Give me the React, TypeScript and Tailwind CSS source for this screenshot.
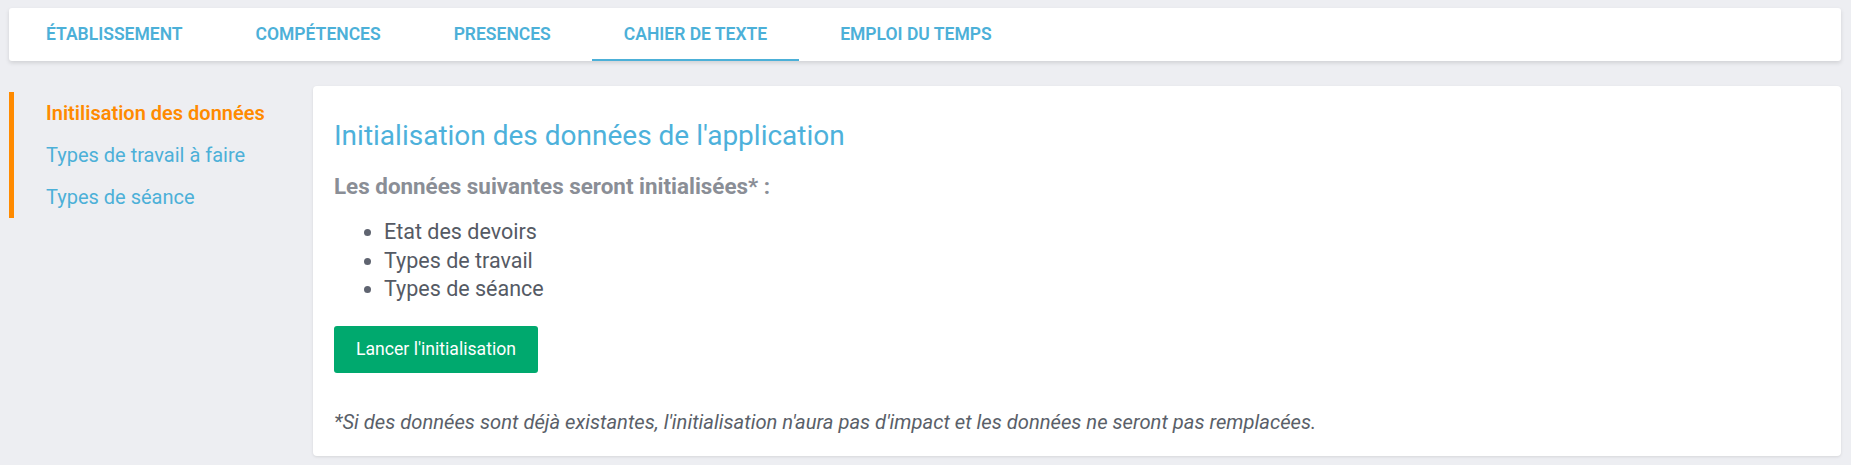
const tabs = ['Établissement', 'Compétences', 'Presences', 'Cahier de texte', 'Emploi du temps'];

const menu = [
  { label: 'Initilisation des données', active: true },
  { label: 'Types de travail à faire', active: false },
  { label: 'Types de séance', active: false },
];

const items = ['Etat des devoirs', 'Types de travail', 'Types de séance'];

export default function App() {
  return (
    <div
      className="min-h-[465px] bg-[#edeef2] pl-[9px] pr-[10px] pt-[8px]"
      style={{ fontFamily: 'Roboto, "Noto Sans", sans-serif' }}
    >
      {/* onglets */}
      <div className="flex h-[53px] items-stretch gap-[9px] rounded-[3px] bg-white pl-[5px] shadow-[0_2px_4px_rgba(0,0,0,0.12)]">
        {tabs.map((tab, i) => {
          const active = i === 3;
          return (
            <div
              key={tab}
              className={`flex items-center px-[32px] pt-[2px] text-[17.5px] font-semibold uppercase text-[#4cb0d8] ${
                active ? 'border-b-2 border-[#4cb0d8]' : 'border-b-2 border-transparent'
              }`}
            >
              {tab}
            </div>
          );
        })}
      </div>

      <div className="mt-[25px] flex">
        {/* menu latéral */}
        <div className="w-[304px] shrink-0 pt-[6px]">
          <div className="border-l-[5px] border-[#ff8a00]">
            {menu.map(m => (
              <div
                key={m.label}
                className={`flex h-[42px] items-center pl-[32px] text-[20px] ${
                  m.active ? 'font-semibold text-[#ff8a00]' : 'text-[#4cb0d8]'
                }`}
              >
                {m.label}
              </div>
            ))}
          </div>
        </div>

        {/* contenu */}
        <div className="h-[370px] flex-1 rounded-[4px] bg-white px-[21px] pt-[35px] shadow-[0_1px_3px_rgba(0,0,0,0.1)]">
          <h1 className="text-[28px] leading-[30px] text-[#4db1db]">
            Initialisation des données de l'application
          </h1>
          <p className="mt-[22px] text-[22.4px] font-bold leading-[26px] text-[#8a8e96]">
            Les données suivantes seront initialisées* :
          </p>
          <ul className="mt-[19px] list-disc pl-[50px] text-[21.5px] leading-[28.5px] text-[#555a64] marker:text-[#5f6470]">
            {items.map(item => (
              <li key={item}>{item}</li>
            ))}
          </ul>
          <button className="mt-[22px] h-[47px] w-[204px] rounded-[3px] bg-[#00a96e] text-[17.6px] text-white">
            Lancer l'initialisation
          </button>
          <p className="mt-[37px] text-[20.2px] italic leading-[25px] text-[#5a5f69]">
            *Si des données sont déjà existantes, l'initialisation n'aura pas d'impact et les données ne seront pas remplacées.
          </p>
        </div>
      </div>
    </div>
  );
}
